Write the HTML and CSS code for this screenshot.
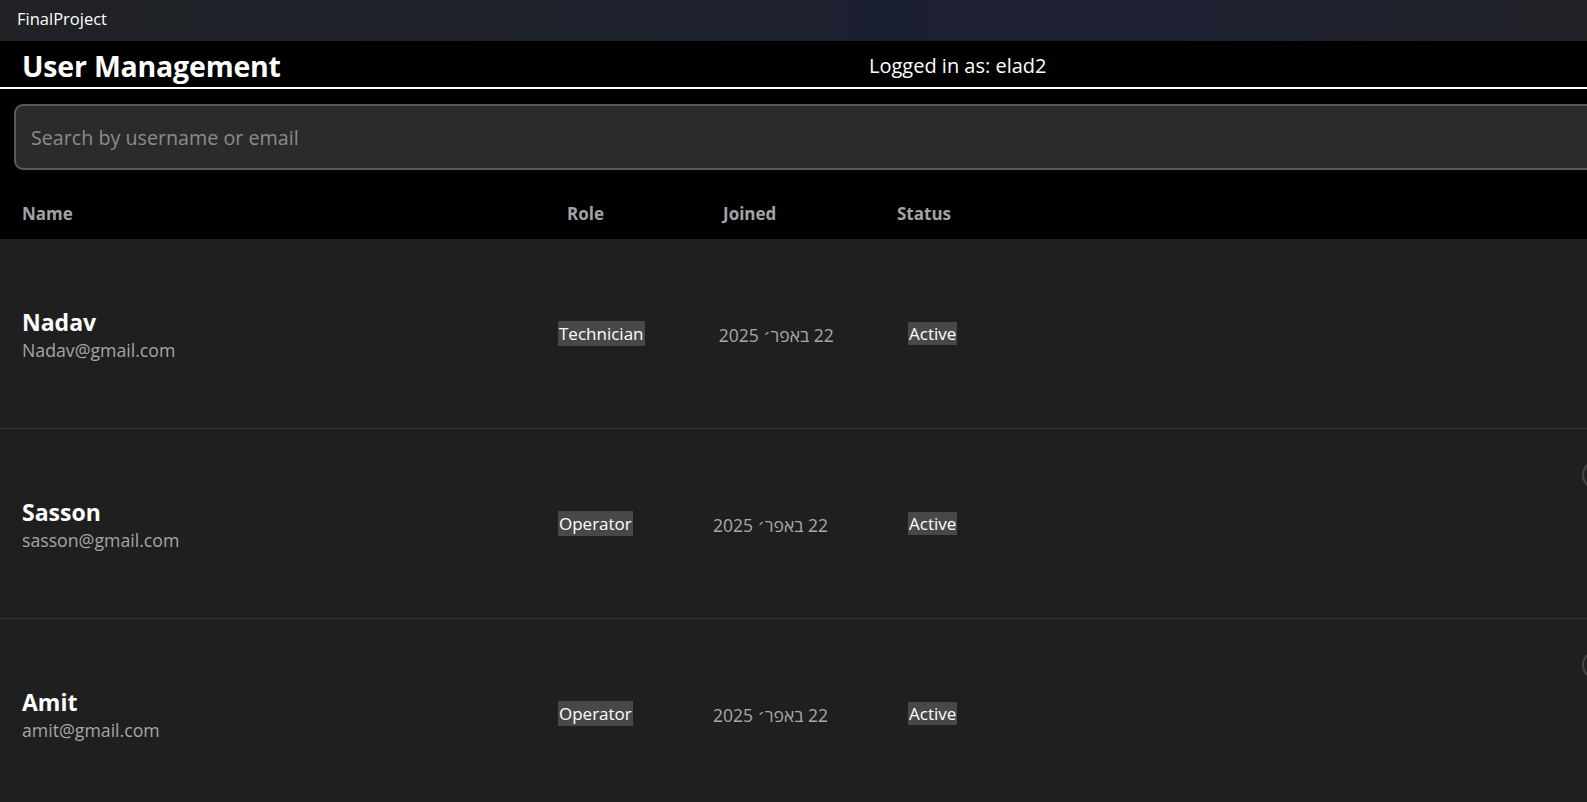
FILE: index.html
```html
<!DOCTYPE html>
<html lang="en">
<head>
<meta charset="utf-8">
<title>FinalProject</title>
<link rel="stylesheet" href="styles.css">
</head>
<body>
<div class="titlebar">FinalProject</div>
<main class="page">
  <header class="header">
    <h1 class="title">User Management</h1>
    <div class="logged">Logged in as: elad2</div>
  </header>
  <div class="search-wrap">
    <div class="search"><input class="search-input" type="text" placeholder="Search by username or email"></div>
  </div>
  <div class="thead">
    <div class="th">Name</div>
    <div class="th">Role</div>
    <div class="th">Joined</div>
    <div class="th">Status</div>
  </div>
  <div class="row">
    <div class="user">
      <div class="user-name">Nadav</div>
      <div class="user-email">Nadav@gmail.com</div>
    </div>
    <div class="mid">
      <span class="badge">Technician</span>
      <span class="date" dir="rtl">22 באפר׳ 2025</span>
    </div>
    <div class="status"><span class="badge">Active</span></div>
    <div class="action-slot"></div>
  </div>
  <div class="row">
    <div class="user">
      <div class="user-name">Sasson</div>
      <div class="user-email">sasson@gmail.com</div>
    </div>
    <div class="mid">
      <span class="badge">Operator</span>
      <span class="date" dir="rtl">22 באפר׳ 2025</span>
    </div>
    <div class="status"><span class="badge">Active</span></div>
    <div class="action-slot"><span class="action"></span></div>
  </div>
  <div class="row">
    <div class="user">
      <div class="user-name">Amit</div>
      <div class="user-email">amit@gmail.com</div>
    </div>
    <div class="mid">
      <span class="badge">Operator</span>
      <span class="date" dir="rtl">22 באפר׳ 2025</span>
    </div>
    <div class="status"><span class="badge">Active</span></div>
    <div class="action-slot"><span class="action"></span></div>
  </div>
</main>
</body>
</html>
```
FILE: styles.css
```css
html, body {
  margin: 0;
  padding: 0;
  background: #000;
  overflow: hidden;
  height: 802px;
}
body {
  font-family: "Open Sans", "DejaVu Sans", sans-serif;
  color: #fff;
}
.titlebar {
  height: 41px;
  box-sizing: border-box;
  padding: 0 0 5px 17px;
  display: flex;
  align-items: center;
  font-size: 16.5px;
  color: #fff;
  background: linear-gradient(90deg, #202226 0%, #1e2129 30%, #1b2030 55%, #1c2030 75%, #212226 100%);
}
.page {
  width: 1640px;
  background: #000;
}
.header {
  height: 48px;
  box-sizing: border-box;
  padding: 3px 0 0 22px;
  display: flex;
  align-items: center;
  border-bottom: 2px solid #fff;
}
.title {
  margin: 0;
  font-size: 28.5px;
  font-weight: 700;
  width: 847px;
  letter-spacing: -0.2px;
}
.logged {
  font-size: 20px;
}
.search-wrap {
  padding: 15px 0 0 14px;
}
.search {
  height: 66px;
  box-sizing: border-box;
  border: 2px solid #5a5a5a;
  border-radius: 9px;
  background: #2b2b2b;
  display: flex;
  align-items: center;
}
.search-input {
  width: 100%;
  border: none;
  outline: none;
  background: transparent;
  font-family: inherit;
  font-size: 19.7px;
  color: #fff;
  padding: 0 0 0 15px;
}
.search-input::placeholder {
  color: #8c8c8c;
}
.thead {
  height: 69px;
  box-sizing: border-box;
  padding: 17px 0 0 22px;
  display: grid;
  grid-template-columns: 545px 156px 174px auto;
  align-items: center;
}
.th {
  font-size: 17px;
  font-weight: 700;
  color: #a3a3a3;
}
.row {
  height: 190px;
  box-sizing: border-box;
  background: #1f1f1f;
  border-bottom: 1px solid #343434;
  display: grid;
  grid-template-columns: 535px 351px 674px 30px;
  padding-left: 22px;
  align-items: center;
}
.user {
  padding-top: 2px;
}
.user-name {
  font-size: 23px;
  font-weight: 700;
  line-height: 30px;
}
.user-email {
  font-size: 17.7px;
  color: #a6a6a6;
  line-height: 26px;
}
.mid {
  display: flex;
  align-items: center;
}
.badge {
  background: #484848;
  color: #fff;
  font-size: 17px;
  line-height: 25px;
  padding: 0 1px;
}
.mid .badge {
  margin-left: 1px;
}
.date {
  flex: 1;
  text-align: center;
  font-size: 17.5px;
  color: #a8a8a8;
  padding-top: 2px;
}
.action-slot {
  align-self: start;
  padding-top: 31px;
}
.action {
  display: block;
  width: 30px;
  height: 30px;
  box-sizing: border-box;
  border: 2px solid #454545;
  border-radius: 50%;
  background: #222;
}
```
